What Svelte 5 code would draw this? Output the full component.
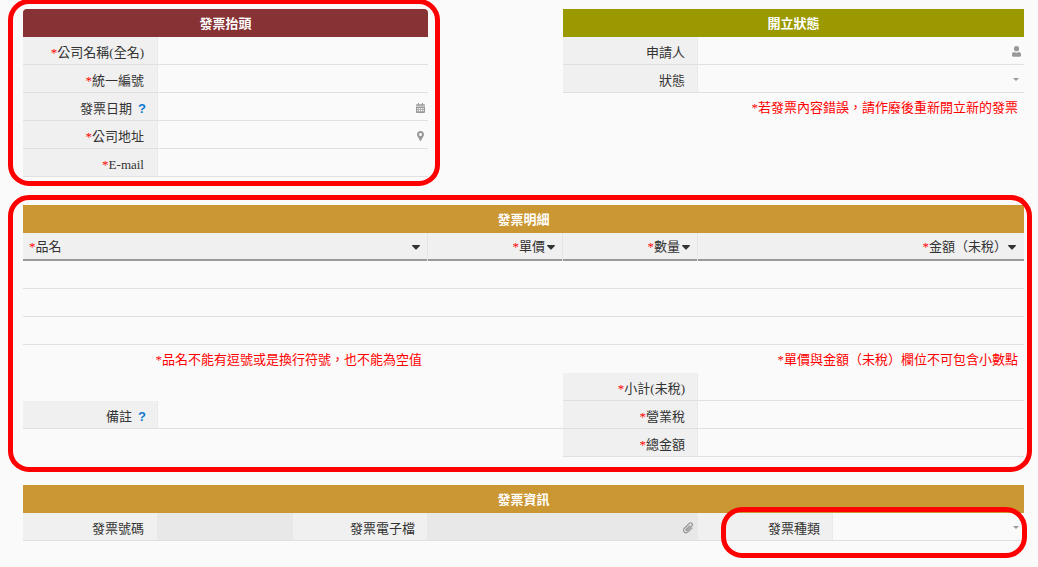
<script>
  const rows = ['', '', ''];
</script>

{#snippet req(text)}<span class="star">*</span>{text}{/snippet}

{#snippet help()}<span class="help">?</span>{/snippet}

{#snippet caret()}
  <svg class="sort" width="8" height="5" viewBox="0 0 8 5"><path d="M0.6 0h6.8c.5 0 .8.6.4 1L4.4 4.6c-.2.2-.6.2-.8 0L.2 1C-.2.6.1 0 .6 0z" /></svg>
{/snippet}

{#snippet pick()}
  <svg class="icon pick" width="6" height="3" viewBox="0 0 6 3"><path d="M0 0h6L3 3z" /></svg>
{/snippet}

<div class="page">
  <div class="top">
    <section class="head-form">
      <h2 class="red">發票抬頭</h2>
      <div class="row"><div class="label">{@render req('公司名稱(全名)')}</div><div class="value"></div></div>
      <div class="row"><div class="label">{@render req('統一編號')}</div><div class="value"></div></div>
      <div class="row">
        <div class="label">發票日期{@render help()}</div>
        <div class="value">
          <svg class="icon" width="9" height="10" viewBox="0 0 9 10">
            <path d="M0 3.400h9v5.600c0 .5-.4 1-1 1H1c-.6 0-1-.5-1-1zM1 1.200h1V0h1v1.200h3V0h1v1.200h1c.6 0 1 .4 1 1v.5H0v-.5c0-.6.4-1 1-1z" />
            <path class="holes" d="M1.200 5h1.200v1.200H1.200zM3 5h1.200v1.200H3zM4.800 5H6v1.200H4.800zM6.600 5h1.200v1.200H6.600zM1.200 7h1.200v1.200H1.200zM3 7h1.200v1.200H3zM4.800 7H6v1.200H4.800zM6.600 7h1.200v1.200H6.600z" />
          </svg>
        </div>
      </div>
      <div class="row">
        <div class="label">{@render req('公司地址')}</div>
        <div class="value">
          <svg class="icon marker" width="7" height="10" viewBox="0 0 7 10">
            <path fill-rule="evenodd" d="M3.500 0C5.500 0 7 1.500 7 3.400c0 .6-.1 1-.4 1.600L4 9.700c-.2.4-.8.4-1 0L.4 5C.1 4.400 0 4 0 3.400 0 1.500 1.500 0 3.500 0zm0 2C2.700 2 2 2.700 2 3.500S2.700 5 3.500 5 5 4.300 5 3.500 4.300 2 3.500 2z" />
          </svg>
        </div>
      </div>
      <div class="row"><div class="label">{@render req('E-mail')}</div><div class="value"></div></div>
    </section>

    <section class="status">
      <h2 class="olive">開立狀態</h2>
      <div class="row">
        <div class="label">申請人</div>
        <div class="value">
          <svg class="icon" width="9" height="11" viewBox="0 0 9 11">
            <circle cx="4.500" cy="2.700" r="2.600" />
            <path d="M0 9.600V8.200C0 6.800 1 5.900 2.200 5.900c.6.500 1.400.8 2.300.8s1.700-.3 2.300-.8C8 5.900 9 6.800 9 8.200v1.400c0 .7-.5 1.100-1.100 1.100H1.100C.5 10.700 0 10.300 0 9.600z" />
          </svg>
        </div>
      </div>
      <div class="row"><div class="label">狀態</div><div class="value">{@render pick()}</div></div>
      <p class="note">*若發票內容錯誤，請作廢後重新開立新的發票</p>
    </section>
  </div>

  <section class="detail">
    <h2 class="gold">發票明細</h2>
    <div class="thead">
      <div class="th left"><span>{@render req('品名')}</span>{@render caret()}</div>
      <div class="th"><span>{@render req('單價')}</span>{@render caret()}</div>
      <div class="th"><span>{@render req('數量')}</span>{@render caret()}</div>
      <div class="th wide"><span>{@render req('金額（未稅）')}</span>{@render caret()}</div>
    </div>
    {#each rows as _}
      <div class="tr"></div>
    {/each}
    <div class="notes">
      <p class="note">*品名不能有逗號或是換行符號，也不能為空值</p>
      <p class="note">*單價與金額（未稅）欄位不可包含小數點</p>
    </div>
    <div class="summary">
      <div class="remark">
        <div class="row"><div class="label">備註{@render help()}</div><div class="value"></div></div>
      </div>
      <div class="totals">
        <div class="row"><div class="label">{@render req('小計(未稅)')}</div><div class="value"></div></div>
        <div class="row"><div class="label">{@render req('營業稅')}</div><div class="value"></div></div>
        <div class="row"><div class="label">{@render req('總金額')}</div><div class="value"></div></div>
      </div>
    </div>
  </section>

  <section class="info">
    <h2 class="gold">發票資訊</h2>
    <div class="row triple">
      <div class="label plain">發票號碼</div>
      <div class="value off"></div>
      <div class="label plain tight">發票電子檔</div>
      <div class="value off">
        <svg class="icon clip" width="11" height="12" viewBox="0 0 11 12">
          <path d="M9.300 5.600 5 9.900C3.900 11 2.300 11 1.300 10S.3 7.400 1.400 6.300L6.300 1.400C7 .7 8.100.7 8.800 1.400s.7 1.800 0 2.500L4.400 8.300c-.4.400-.9.400-1.200.1s-.3-.8.100-1.200l3.600-3.600" />
        </svg>
      </div>
      <div class="label tight">發票種類</div>
      <div class="value">{@render pick()}</div>
    </div>
  </section>

  <div class="mark mark-head"></div>
  <div class="mark mark-detail"></div>
  <div class="mark mark-type"></div>
</div>

<style>
  :global(body) {
    background: #fafafa;
  }

  .page {
    position: relative;
    height: 567px;
    overflow: hidden;
    box-sizing: border-box;
    padding: 9px 14px 0 23px;
    font: 13px/28px "Liberation Serif", "Noto Sans CJK TC", serif;
    color: #333;
  }

  h2 {
    margin: 0;
    height: 28px;
    font-size: 13px;
    line-height: 30px;
    font-weight: bold;
    color: #fff;
    text-align: center;
  }
  .red { background: #873234; border-radius: 4px 4px 0 0; }
  .olive { background: #9a9a00; }
  .gold { background: #cb9732; }

  .top { display: flex; justify-content: space-between; }
  .head-form { width: 405px; }
  .status { width: 461px; }

  .row {
    display: flex;
    height: 28px;
    box-sizing: border-box;
    border-bottom: 1px solid #e0e0e0;
  }
  .label {
    flex: none;
    width: 135px;
    height: 27px;
    box-sizing: border-box;
    padding-right: 13px;
    text-align: right;
    background: #f0f0f0;
    border-right: 1px solid #eaeaea;
    line-height: 31px;
  }
  .status .label, .totals .label, .label.tight { padding-right: 12px; }
  .value {
    flex: 1;
    display: flex;
    align-items: center;
    justify-content: flex-end;
    box-sizing: border-box;
    padding: 2px 3px 0 0;
  }
  .off { background: #e8e8e8; }

  .star { color: #f00; }
  .help {
    display: inline-block;
    width: 6px;
    margin-left: 6px;
    font: bold 13px/1 "Liberation Sans", sans-serif;
    color: #0b78d0;
  }
  .icon { display: block; fill: #999; }
  .icon .holes { fill: #fafafa; }
  .marker { margin-right: 1px; }
  .pick { margin-right: 2px; }
  .clip { fill: none; stroke: #999; stroke-width: 1.300; margin-right: 1px; }

  .note {
    margin: 0;
    padding-right: 6px;
    text-align: right;
    color: #f00;
    line-height: 29px;
  }
  .status .note { margin-top: 1px; line-height: 28px; }

  .detail { margin-top: 28px; }
  .thead {
    display: grid;
    grid-template-columns: 405px 135px 135px 326px;
    height: 28px;
    box-sizing: border-box;
    border-bottom: 2px solid #999;
    background: #f0f0f0;
  }
  .th {
    display: flex;
    align-items: center;
    justify-content: flex-end;
    gap: 2px;
    padding: 0 7px 0 0;
    border-right: 1px solid #e4e4e4;
    height: 28px;
    box-sizing: border-box;
    line-height: 30px;
  }
  .th.left { justify-content: space-between; padding-left: 6px; }
  .th.wide { border-right: 0; padding-right: 8px; gap: 1px; }
  .sort { flex: none; fill: #333; }
  .tr {
    height: 28px;
    box-sizing: border-box;
    border-bottom: 1px solid #e0e0e0;
  }
  .notes { display: grid; grid-template-columns: 405px 1fr; height: 28px; }
  .summary {
    display: grid;
    grid-template-columns: 540px 461px;
  }
  .remark { padding-top: 28px; }

  .info { margin-top: 28px; }
  .triple {
    display: grid;
    grid-template-columns: 134px 136px 134px 271px 135px 191px;
  }
  .label.plain { width: auto; border-right: 0; }
  .triple .label { width: auto; }

  .mark {
    position: absolute;
    box-sizing: border-box;
    border: 5px solid #f00;
    border-radius: 21px;
  }
  .mark-head { left: 8px; top: -1px; width: 432px; height: 187px; }
  .mark-detail { left: 8px; top: 195px; width: 1024px; height: 277px; }
  .mark-type { left: 721px; top: 507px; width: 306px; height: 51px; }
</style>
